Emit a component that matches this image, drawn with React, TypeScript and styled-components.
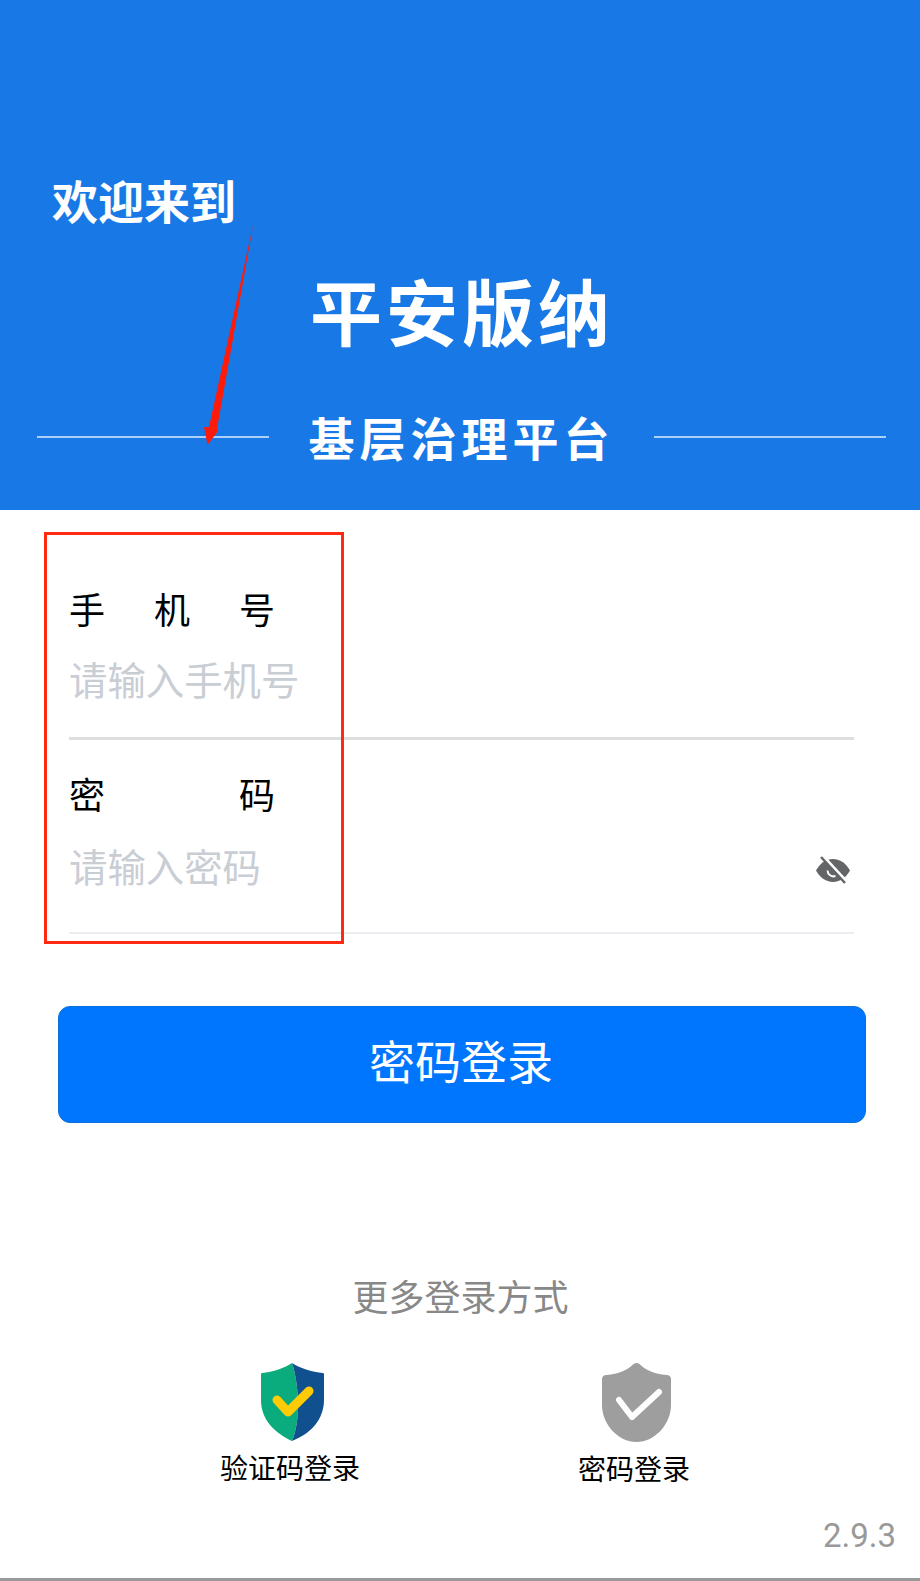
import { FC } from "react"
import styled, { createGlobalStyle } from "styled-components"

const GlobalStyle = createGlobalStyle`
	html,
	body {
		margin: 0;
		padding: 0;
		background: #fff;
		font-family: "Noto Sans CJK SC", "Noto Sans", sans-serif;
	}
	* {
		box-sizing: border-box;
	}
`

const Page = styled.div`
	position: relative;
	width: 920px;
	height: 1581px;
	overflow: hidden;
	background: #fff;
	border-bottom: 3px solid #999;
`

const Header = styled.header`
	height: 510px;
	padding-top: 167px;
	background: #1879e6;
	color: #fff;
	display: flex;
	flex-direction: column;
`

const Greeting = styled.div`
	padding-left: 52px;
	font-size: 46px;
	line-height: 64px;
	font-weight: 700;
`

const Title = styled.h1`
	margin: 33px 0 0;
	padding-left: 4px;
	text-align: center;
	font-size: 72px;
	line-height: 90px;
	font-weight: 700;
	letter-spacing: 4px;
`

const SubRow = styled.div`
	margin-top: 52px;
	padding: 0 34px 0 37px;
	display: flex;
	align-items: center;
	justify-content: space-between;
`

const SubLine = styled.span`
	width: 232px;
	height: 2px;
	margin-top: 2px;
	background: rgba(255, 255, 255, 0.65);
`

const SubTitle = styled.div`
	font-size: 46px;
	line-height: 60px;
	font-weight: 700;
	letter-spacing: 5px;
`

const Form = styled.form`
	padding: 74px 66px 0 69px;
`

const Field = styled.div<{ $thin?: boolean }>`
	height: ${(p) => (p.$thin ? "165px" : "156px")};
	border-bottom: ${(p) => (p.$thin ? "2px solid #ebedf0" : "3px solid #dcdee0")};
	margin-bottom: ${(p) => (p.$thin ? "0" : "29px")};
`

const Label = styled.label`
	display: block;
	width: 206px;
	font-size: 36px;
	line-height: 48px;
	color: #000;
	text-align: justify;
	text-align-last: justify;
`

const InputRow = styled.div<{ $gap: number }>`
	margin-top: ${(p) => p.$gap}px;
	display: flex;
	align-items: center;
	justify-content: space-between;
	padding-right: 3px;

	svg {
		margin-top: 10px;
	}
`

const Input = styled.input`
	flex: 1;
	min-width: 0;
	padding: 0;
	border: 0;
	outline: 0;
	background: transparent;
	font: inherit;
	font-size: 38.4px;
	line-height: 52px;
	height: 52px;
	color: #323233;

	&::placeholder {
		color: #c9cdd4;
		opacity: 1;
	}
`

const SubmitButton = styled.button`
	display: block;
	width: 808px;
	height: 117px;
	margin: 72px 0 0 58px;
	padding: 0 2px 12px 0;
	border: 1px solid #0a6fd8;
	border-radius: 12px;
	background: #0076ff;
	color: #fff;
	font: inherit;
	font-size: 46px;
`

const MoreTitle = styled.div`
	margin-top: 147px;
	padding-left: 1px;
	text-align: center;
	font-size: 36px;
	line-height: 50px;
	color: #888;
`

const Methods = styled.div`
	margin-top: 43px;
	display: flex;
`

const Method = styled.div<{ $left: number; $width: number }>`
	margin-left: ${(p) => p.$left}px;
	width: ${(p) => p.$width}px;
	display: flex;
	flex-direction: column;
	align-items: center;
	font-size: 28px;
	line-height: 40px;
	color: #000;

	svg {
		display: block;
		margin: 0 0 6px 4px;
	}
`

const Version = styled.div`
	margin-top: 28px;
	padding-right: 24px;
	text-align: right;
	font-family: Roboto, sans-serif;
	font-size: 33px;
	line-height: 40px;
	color: #999;
`

const AnnotationBox = styled.div`
	position: absolute;
	left: 44px;
	top: 532px;
	width: 300px;
	height: 412px;
	border: 3px solid #ff2a12;
	pointer-events: none;
`

const AnnotationArrow = styled.svg`
	position: absolute;
	left: 195px;
	top: 215px;
	pointer-events: none;
`

const EyeOff: FC = () => (
	<svg width="36" height="28" viewBox="0 0 36 28">
		<path d="M18 3C10.500 3 4.500 8 1 14.500 4.500 21 10.500 26 18 26s13.500-5 17-11.500C31.500 8 25.500 3 18 3z" fill="#646566" />
		<path d="M12.500 14.500a6 6 0 0 0 8 5.500" fill="none" stroke="#fff" strokeWidth="2" />
		<path d="M8 0l24 26" stroke="#fff" strokeWidth="3" />
		<path d="M6 1l24 26" stroke="#646566" strokeWidth="2.500" />
	</svg>
)

const ColorShield: FC = () => (
	<svg width="63" height="78" viewBox="0 0 63 78">
		<path d="M31 0C24 5 12 9 1 10c-1 0-1 1-1 2v25c0 20 14 33 31 41 4-10 6-22 6-34 0-16-2-32-6-44z" fill="#0aab7d" />
		<path d="M31 0c4 12 6 28 6 44 0 12-2 24-6 34 18-7 32-21 32-41V12c0-1 0-2-1-2C51 9 38 5 31 0z" fill="#11508f" />
		<path d="M16 37l11 12 21-21" fill="none" stroke="#ffcb05" strokeWidth="9" strokeLinecap="round" strokeLinejoin="round" />
	</svg>
)

const GrayShield: FC = () => (
	<svg width="69" height="79" viewBox="0 0 69 79">
		<path d="M34.500 0c-2 0-3 1-4 2-5 5-14 9-26 10-3 0-4.500 2-4.500 4v26c0 19 16 37 34.500 37S69 61 69 42V16c0-2-1.500-4-4.500-4-12-1-21-5-26-10-1-1-2-2-4-2z" fill="#9e9e9e" />
		<path d="M17 37l13 17 27-25" fill="none" stroke="#fff" strokeWidth="6" strokeLinecap="round" strokeLinejoin="round" />
	</svg>
)

const App: FC = () => (
	<Page>
		<GlobalStyle />
		<Header>
			<Greeting>欢迎来到</Greeting>
			<Title>平安版纳</Title>
			<SubRow>
				<SubLine />
				<SubTitle>基层治理平台</SubTitle>
				<SubLine />
			</SubRow>
		</Header>
		<Form>
			<Field>
				<Label>手机号</Label>
				<InputRow $gap={20}>
					<Input placeholder="请输入手机号" />
				</InputRow>
			</Field>
			<Field $thin>
				<Label>密码</Label>
				<InputRow $gap={22}>
					<Input placeholder="请输入密码" />
					<EyeOff />
				</InputRow>
			</Field>
		</Form>
		<SubmitButton type="button">密码登录</SubmitButton>
		<MoreTitle>更多登录方式</MoreTitle>
		<Methods>
			<Method $left={190} $width={200}>
				<ColorShield />
				验证码登录
			</Method>
			<Method $left={144} $width={200}>
				<GrayShield />
				密码登录
			</Method>
		</Methods>
		<Version>2.9.3</Version>
		<AnnotationBox />
		<AnnotationArrow width="70" height="240" viewBox="0 0 70 240">
			<path d="M58.500 8 14 212 9 212 12.500 230 23 216 22 214z" fill="#ff1a0a" />
		</AnnotationArrow>
	</Page>
)

export default App
